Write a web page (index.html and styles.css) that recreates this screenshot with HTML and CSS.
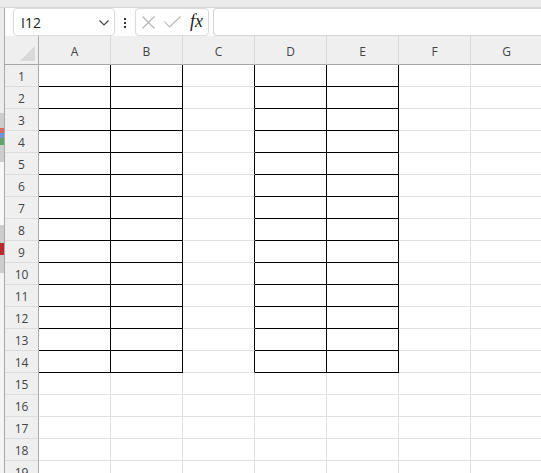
FILE: index.html
```html
<!DOCTYPE html>
<html>
<head>
<meta charset="utf-8">
<link rel="stylesheet" href="styles.css">
</head>
<body>
<div class="band"></div>
<div class="wrap">
  <div class="strip"></div>
  <div class="main">
    <div class="fbar">
      <div class="namebox">
        <span class="ref">I12</span>
        <svg class="chev" width="10" height="6" viewBox="0 0 10 6"><path d="M0.5 0.5 L5 5 L9.5 0.5" fill="none" stroke="#444" stroke-width="1.2"/></svg>
      </div>
      <div class="dots"><i></i><i></i><i></i></div>
      <div class="fxbox">
        <svg class="ico" width="13" height="13" viewBox="0 0 13 13"><path d="M0.5 0.5 L12.5 12.5 M12.5 0.5 L0.5 12.5" stroke="#b4b4b4" stroke-width="1.1" fill="none"/></svg>
        <svg class="ico" width="17" height="12" viewBox="0 0 17 12"><path d="M0.5 5.5 L5.5 11 L16.5 0.5" stroke="#b4b4b4" stroke-width="1.1" fill="none"/></svg>
        <span class="fx">fx</span>
      </div>
      <div class="input"></div>
    </div>
    <div class="sheet">
      <div class="corner"><span class="tri"></span></div>
      <div class="ch">A</div><div class="ch">B</div><div class="ch">C</div><div class="ch">D</div><div class="ch">E</div><div class="ch">F</div><div class="ch">G</div>

      <div class="rh">1</div><div class="c k"></div><div class="c k"></div><div class="c kr"></div><div class="c k"></div><div class="c k"></div><div class="c"></div><div class="c"></div>
      <div class="rh">2</div><div class="c k"></div><div class="c k"></div><div class="c kr"></div><div class="c k"></div><div class="c k"></div><div class="c"></div><div class="c"></div>
      <div class="rh">3</div><div class="c k"></div><div class="c k"></div><div class="c kr"></div><div class="c k"></div><div class="c k"></div><div class="c"></div><div class="c"></div>
      <div class="rh">4</div><div class="c k"></div><div class="c k"></div><div class="c kr"></div><div class="c k"></div><div class="c k"></div><div class="c"></div><div class="c"></div>
      <div class="rh">5</div><div class="c k"></div><div class="c k"></div><div class="c kr"></div><div class="c k"></div><div class="c k"></div><div class="c"></div><div class="c"></div>
      <div class="rh">6</div><div class="c k"></div><div class="c k"></div><div class="c kr"></div><div class="c k"></div><div class="c k"></div><div class="c"></div><div class="c"></div>
      <div class="rh">7</div><div class="c k"></div><div class="c k"></div><div class="c kr"></div><div class="c k"></div><div class="c k"></div><div class="c"></div><div class="c"></div>
      <div class="rh">8</div><div class="c k"></div><div class="c k"></div><div class="c kr"></div><div class="c k"></div><div class="c k"></div><div class="c"></div><div class="c"></div>
      <div class="rh">9</div><div class="c k"></div><div class="c k"></div><div class="c kr"></div><div class="c k"></div><div class="c k"></div><div class="c"></div><div class="c"></div>
      <div class="rh">10</div><div class="c k"></div><div class="c k"></div><div class="c kr"></div><div class="c k"></div><div class="c k"></div><div class="c"></div><div class="c"></div>
      <div class="rh">11</div><div class="c k"></div><div class="c k"></div><div class="c kr"></div><div class="c k"></div><div class="c k"></div><div class="c"></div><div class="c"></div>
      <div class="rh">12</div><div class="c k"></div><div class="c k"></div><div class="c kr"></div><div class="c k"></div><div class="c k"></div><div class="c"></div><div class="c"></div>
      <div class="rh">13</div><div class="c k"></div><div class="c k"></div><div class="c kr"></div><div class="c k"></div><div class="c k"></div><div class="c"></div><div class="c"></div>
      <div class="rh">14</div><div class="c k"></div><div class="c k"></div><div class="c kr"></div><div class="c k"></div><div class="c k"></div><div class="c"></div><div class="c"></div>
      <div class="rh">15</div><div class="c"></div><div class="c"></div><div class="c"></div><div class="c"></div><div class="c"></div><div class="c"></div><div class="c"></div>
      <div class="rh">16</div><div class="c"></div><div class="c"></div><div class="c"></div><div class="c"></div><div class="c"></div><div class="c"></div><div class="c"></div>
      <div class="rh">17</div><div class="c"></div><div class="c"></div><div class="c"></div><div class="c"></div><div class="c"></div><div class="c"></div><div class="c"></div>
      <div class="rh">18</div><div class="c"></div><div class="c"></div><div class="c"></div><div class="c"></div><div class="c"></div><div class="c"></div><div class="c"></div>
      <div class="rh">19</div><div class="c"></div><div class="c"></div><div class="c"></div><div class="c"></div><div class="c"></div><div class="c"></div><div class="c"></div>
    </div>
  </div>
</div>
</body>
</html>
```

FILE: styles.css
```css
* { box-sizing: border-box; }
html, body {
  margin: 0;
  padding: 0;
  width: 541px;
  height: 473px;
  overflow: hidden;
  background: #ffffff;
  font-family: "Open Sans", "Noto Sans", sans-serif;
}
.band {
  height: 8px;
  background: #e9e9e9;
  border-bottom: 1px solid #d5d5d5;
}
.wrap {
  display: flex;
  height: 465px;
}
.strip {
  flex: 0 0 5px;
  border-right: 1px solid #a9a9a9;
  background: linear-gradient(to bottom,
    #ececec 0, #ececec 105px,
    #cdcdcd 105px, #cdcdcd 120px,
    #d86a62 120px, #d86a62 125px,
    #6f95dd 125px, #6f95dd 130px,
    #5fa66c 130px, #5fa66c 137px,
    #cdcdcd 137px, #cdcdcd 154px,
    #f8f8f8 154px, #f8f8f8 217px,
    #cdcdcd 217px, #cdcdcd 235px,
    #c0262b 235px, #c0262b 247px,
    #cdcdcd 247px, #cdcdcd 265px,
    #f4f4f4 265px);
}
.main {
  flex: 1;
  display: flex;
  flex-direction: column;
  overflow: hidden;
}
.fbar {
  height: 28px;
  flex: 0 0 28px;
  display: flex;
  align-items: stretch;
  padding-left: 8px;
  background: #fdfdfd;
}
.namebox {
  width: 102px;
  border: 1px solid #dadada;
  border-radius: 4px;
  background: #fff;
  display: flex;
  align-items: center;
  justify-content: space-between;
  padding: 0 5px 0 7px;
}
.ref {
  font-size: 14px;
  color: #222;
  padding-top: 1px;
}
.chev { margin-top: 1px; }
.dots {
  width: 20px;
  display: flex;
  flex-direction: column;
  align-items: center;
  justify-content: center;
  gap: 2px;
  padding-top: 1px;
}
.dots i {
  display: block;
  width: 2px;
  height: 2px;
  background: #333;
}
.fxbox {
  width: 74px;
  border: 1px solid #dadada;
  border-radius: 4px;
  background: #fff;
  display: flex;
  align-items: center;
  padding-left: 6px;
  gap: 8px;
}
.fxbox .ico:nth-child(2) { margin-left: 1px; }
.fx {
  font-family: "Liberation Serif", "DejaVu Serif", serif;
  font-style: italic;
  font-size: 18px;
  color: #222;
  margin-left: 1px;
  padding-bottom: 1px;
}
.input {
  flex: 1;
  margin-left: 4px;
  border: 1px solid #d4d4d4;
  border-right: none;
  border-radius: 4px 0 0 4px;
  background: #fff;
}
.sheet {
  display: grid;
  grid-template-columns: 34px repeat(7, 72px);
  grid-template-rows: 29px;
  grid-auto-rows: 22px;
}
.corner {
  background: #efefef;
  border-right: 1px solid #a9a9a9;
  border-bottom: 1px solid #a6a6a6;
  display: flex;
  align-items: flex-end;
  justify-content: flex-end;
  padding: 0 3px 3px 0;
}
.tri {
  display: block;
  width: 15px;
  height: 15px;
  background: #d9d9d9;
  clip-path: polygon(100% 0, 100% 100%, 0 100%);
}
.ch {
  background: #efefef;
  border-right: 1px solid #dadada;
  border-bottom: 1px solid #a6a6a6;
  display: flex;
  align-items: center;
  justify-content: center;
  padding-top: 3px;
  font-size: 12px;
  color: #444;
}
.rh {
  background: #efefef;
  border-right: 1px solid #a9a9a9;
  border-bottom: 1px solid #dcdcdc;
  display: flex;
  align-items: center;
  justify-content: center;
  padding-top: 2px;
  font-size: 12px;
  color: #444;
}
.c {
  border-right: 1px solid #e1e1e1;
  border-bottom: 1px solid #e1e1e1;
}
.c.k {
  border-right-color: #000;
  border-bottom-color: #000;
}
.c.kr {
  border-right-color: #000;
}
```
